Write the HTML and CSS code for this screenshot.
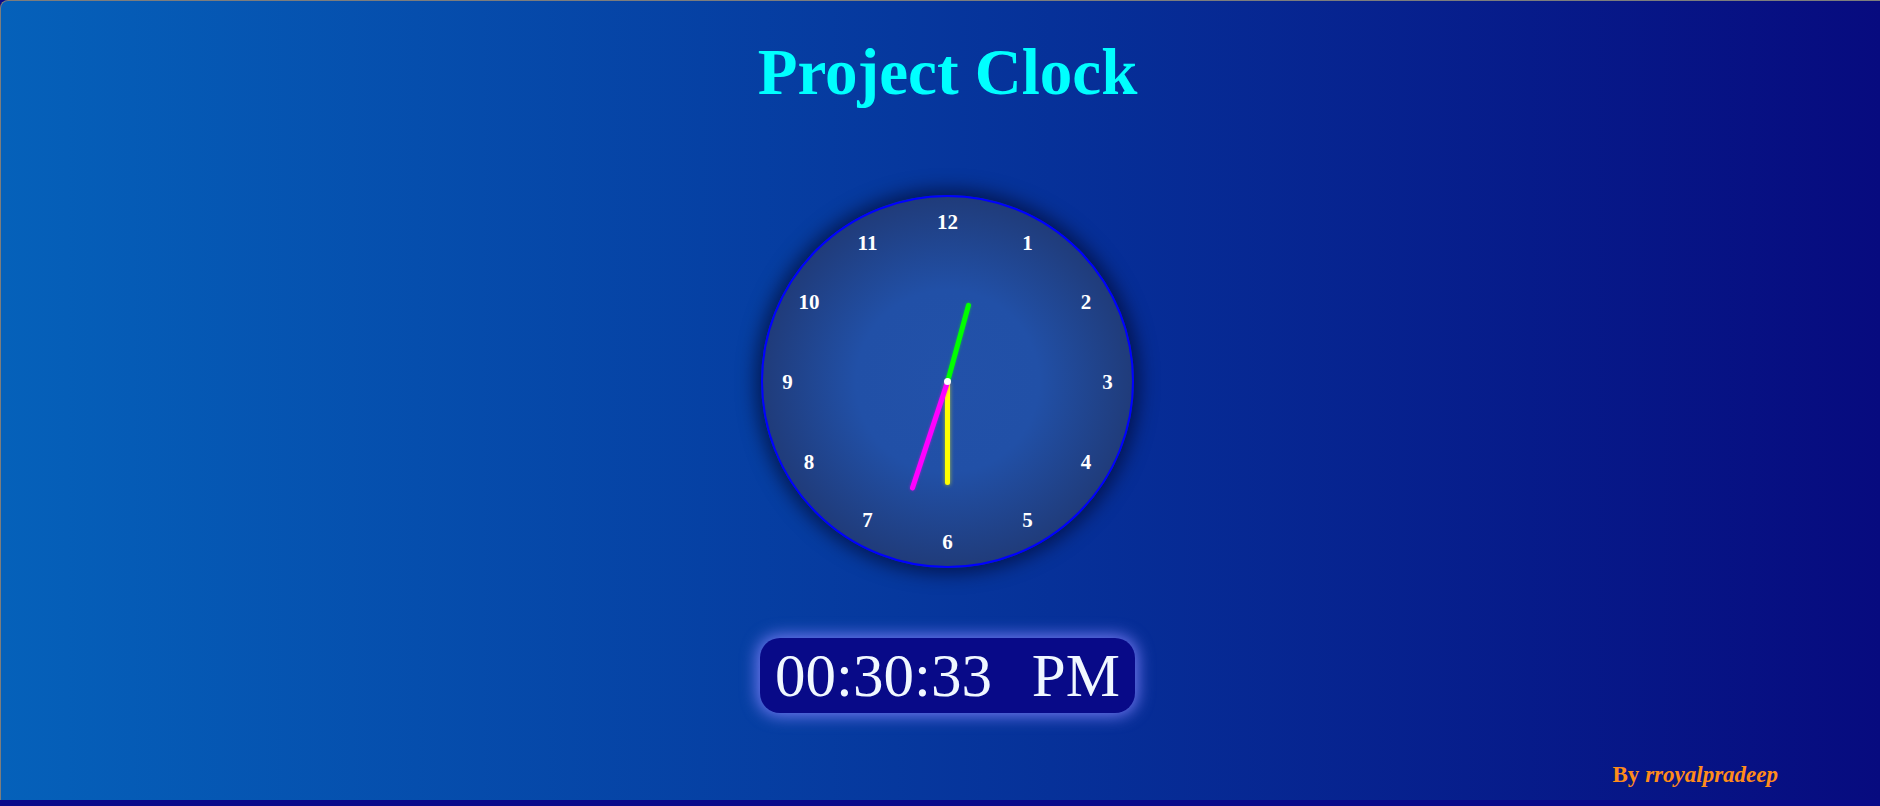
FILE: index.html
```html
<!DOCTYPE html>
<html lang="en">
<head>
<meta charset="utf-8">
<title>Project Clock</title>
<link rel="stylesheet" href="styles.css">
</head>
<body>
<div class="page">
  <h1 class="title">Project Clock</h1>
  <div class="clock">
    <span class="num n1">1</span>
    <span class="num n2">2</span>
    <span class="num n3">3</span>
    <span class="num n4">4</span>
    <span class="num n5">5</span>
    <span class="num n6">6</span>
    <span class="num n7">7</span>
    <span class="num n8">8</span>
    <span class="num n9">9</span>
    <span class="num n10">10</span>
    <span class="num n11">11</span>
    <span class="num n12">12</span>
    <div class="hand hour"></div>
    <div class="hand minute"></div>
    <div class="hand second"></div>
    <div class="pin"></div>
  </div>
  <div class="digital"><span>00:30:33</span><span>PM</span></div>
  <div class="credit"><b>By <i>rroyalpradeep</i></b></div>
</div>
</body>
</html>
```

FILE: styles.css
```css
html, body {
  margin: 0;
  padding: 0;
  overflow: hidden;
}
body {
  background: #0a0a8a;
  height: 806px;
}
.page {
  box-sizing: border-box;
  width: 1880px;
  height: 800px;
  border-left: 1px solid #7d7d7d;
  border-top: 1px solid #7d7d7d;
  border-top-left-radius: 8px;
  padding-left: 14px;
  background: linear-gradient(to right, #0561ba, #070b7f);
  display: flex;
  flex-direction: column;
  align-items: center;
  font-family: "Liberation Serif", "Times New Roman", serif;
}
.title {
  margin: 0;
  padding-top: 39px;
  font-size: 65px;
  line-height: 64px;
  font-weight: bold;
  color: #00ffff;
}
.clock {
  position: relative;
  margin-top: 91px;
  width: 369px;
  height: 369px;
  border: 2px solid #0000ff;
  border-radius: 50%;
  background: radial-gradient(circle, #2251a9 0%, #2150a7 35%, #1f2b56 100%);
  box-shadow: 0 0 18px 6px rgba(0, 0, 30, 0.55);
}
.num {
  position: absolute;
  left: 50%;
  top: 50%;
  font-size: 21px;
  line-height: 21px;
  font-weight: bold;
  color: #ffffff;
  white-space: nowrap;
  transform: translate(-50%, -50%) rotate(var(--a)) translateY(-160px) rotate(calc(-1 * var(--a)));
}
.n1 { --a: 30deg; }
.n2 { --a: 60deg; }
.n3 { --a: 90deg; }
.n4 { --a: 120deg; }
.n5 { --a: 150deg; }
.n6 { --a: 180deg; }
.n7 { --a: 210deg; }
.n8 { --a: 240deg; }
.n9 { --a: 270deg; }
.n10 { --a: 300deg; }
.n11 { --a: 330deg; }
.n12 { --a: 0deg; }
.hand {
  position: absolute;
  bottom: 50%;
  left: calc(50% - 2.5px);
  width: 5px;
  border-radius: 3px;
  transform-origin: 50% 100%;
}
.hour {
  height: 82px;
  background: #00ff00;
  box-shadow: 0 0 3px rgba(0, 255, 0, 0.5);
  transform: rotate(15.3deg);
}
.minute {
  height: 103px;
  background: #ffff00;
  box-shadow: 0 0 4px rgba(255, 255, 0, 0.6);
  transform: rotate(180deg);
}
.second {
  height: 114px;
  width: 5px;
  background: #ff00ff;
  box-shadow: 0 0 3px rgba(255, 0, 255, 0.5);
  transform: rotate(198.3deg);
}
.pin {
  position: absolute;
  left: calc(50% - 3.5px);
  top: calc(50% - 3.5px);
  width: 7px;
  height: 7px;
  border-radius: 50%;
  background: #ffffff;
}
.digital {
  box-sizing: border-box;
  margin-top: 70px;
  width: 375px;
  height: 75px;
  padding: 0 15px 0 15px;
  display: flex;
  justify-content: space-between;
  align-items: center;
  border-radius: 20px;
  background: #080a88;
  box-shadow: 0 0 16px 3px rgba(130, 130, 255, 0.85);
  color: #f0f8ff;
  font-size: 61px;
  line-height: 75px;
}
.credit {
  align-self: flex-end;
  margin-top: 50px;
  margin-right: 102px;
  font-size: 23px;
  line-height: 23px;
  color: #ff8c1a;
}
```
